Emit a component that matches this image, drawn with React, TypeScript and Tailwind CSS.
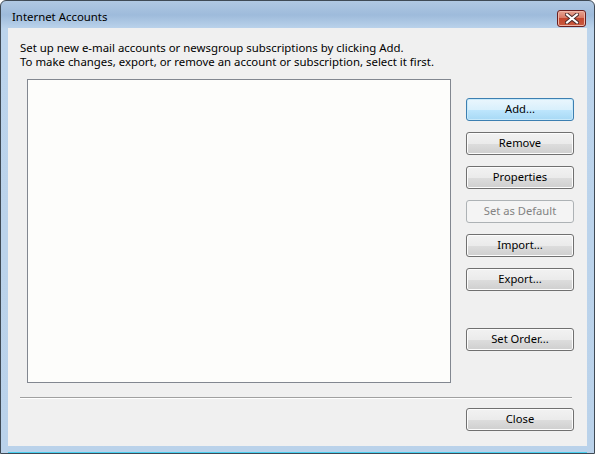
import React from "react";

const font = { fontFamily: '"Segoe UI", "Noto Sans", "Liberation Sans", sans-serif' };

function WinButton({ label, variant = "normal" }: { label: string; variant?: "normal" | "default" | "disabled" }) {
  const base = "w-[108px] h-[23px] rounded-[3px] border text-[11.2px] flex items-center justify-center";
  if (variant === "default") {
    return (
      <div className={`${base} border-[#3c7fb1] bg-[linear-gradient(#eaf6fd_0%,#d9f0fc_50%,#bee6fd_51%,#a7d9f5_100%)] text-black shadow-[inset_0_0_0_1px_#c8e9fa]`}>
        {label}
      </div>
    );
  }
  if (variant === "disabled") {
    return <div className={`${base} border-[#adb2b5] bg-[#f4f4f4] text-[#838383]`}>{label}</div>;
  }
  return (
    <div className={`${base} border-[#707070] bg-[linear-gradient(#f2f2f2_0%,#ebebeb_50%,#dddddd_51%,#cfcfcf_100%)] text-black shadow-[inset_0_0_0_1px_#fcfcfc]`}>
      {label}
    </div>
  );
}

export default function App() {
  return (
    <div style={font} className="w-[595px] h-[454px] bg-white">
      <div className="w-[595px] h-[454px] rounded-t-[6px] border border-[#3f4a55] bg-[linear-gradient(#b0c8e2_0px,#9ebbdb_14px,#bcd4ec_28px,#bad2ea_100%)] flex flex-col">
        {/* Title bar */}
        <div className="h-[27px] flex items-start justify-between shrink-0">
          <div className="pl-[11px] pt-[9px] text-[11.4px] leading-[14px] text-black">Internet Accounts</div>
          <div className="mt-[9px] mr-[8px] w-[29px] h-[17px] rounded-[3px] border border-[#6b1f1f] bg-[linear-gradient(#e8a493_0%,#d97a66_45%,#c4472f_50%,#c85a40_100%)] flex items-center justify-center shadow-[inset_0_0_0_1px_#efb4a6]">
            <svg width="14" height="11" viewBox="0 0 14 11">
              <path d="M2 1.5 L12 9.5 M12 1.5 L2 9.5" stroke="#4a2a2a" strokeWidth="4" strokeLinecap="square" />
              <path d="M2 1.5 L12 9.5 M12 1.5 L2 9.5" stroke="#ffffff" strokeWidth="2" strokeLinecap="square" />
            </svg>
          </div>
        </div>
        {/* Client area */}
        <div className="mx-[7px] h-[418px] bg-[#f0f0f0] pl-[12px] pt-[13px] flex flex-col text-black">
          <div className="text-[11.4px] leading-[14px]">
            <p>Set up new e-mail accounts or newsgroup subscriptions by clicking Add.</p>
            <p>To make changes, export, or remove an account or subscription, select it first.</p>
          </div>
          <div className="flex mt-[10px]">
            <div className="ml-[7px] w-[424px] h-[304px] border border-[#828790] bg-[#fdfdfb]" />
            <div className="ml-[15px] pt-[19px] flex flex-col gap-[11px]">
              <WinButton label="Add..." variant="default" />
              <WinButton label="Remove" />
              <WinButton label="Properties" />
              <WinButton label="Set as Default" variant="disabled" />
              <WinButton label="Import..." />
              <WinButton label="Export..." />
              <div className="mt-[26px]">
                <WinButton label="Set Order..." />
              </div>
            </div>
          </div>
          <div className="mt-[14px] w-[552px] border-t border-[#a0a0a0] border-b border-b-white" />
          <div className="mt-[9px] flex justify-end pr-[13px]">
            <WinButton label="Close" />
          </div>
        </div>
        <div className="mx-[7px] mt-auto h-[1px] bg-[#4ad0f0]" />
      </div>
    </div>
  );
}
